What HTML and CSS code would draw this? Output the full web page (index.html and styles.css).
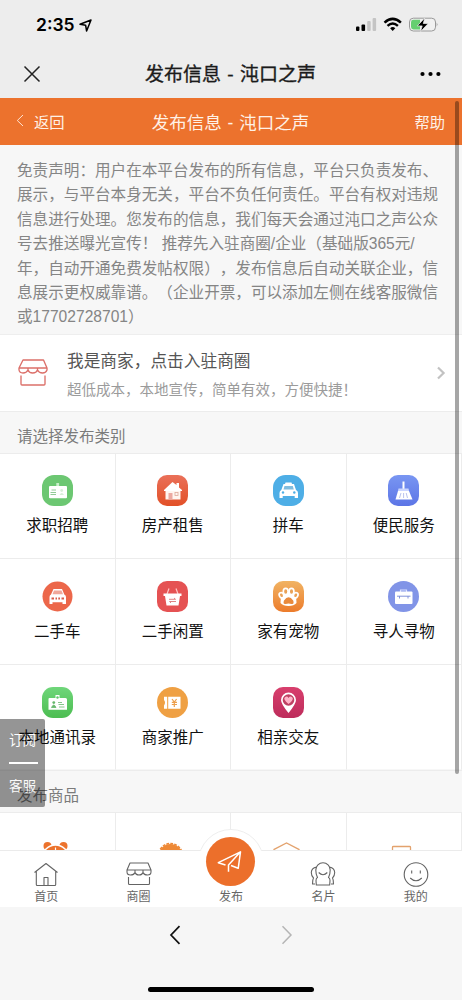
FILE: index.html
```html
<!DOCTYPE html>
<html lang="zh-CN">
<head>
<meta charset="utf-8">
<title>发布信息 - 沌口之声</title>
<link rel="stylesheet" href="styles.css">
</head>
<body>
<div class="phone">
  <header class="status">
    <span class="time">2:35</span>
    <svg class="loc" width="13" height="13" viewBox="0 0 13 13"><path d="M1 5.300 12 1 7.600 12 6.600 6.200Z" fill="none" stroke="#000" stroke-width="1.500" stroke-linejoin="round"/></svg>
    <svg class="indicators" width="84" height="16" viewBox="0 0 84 16">
      <rect x="1" y="9.500" width="3.400" height="4.500" rx="1"/><rect x="6.500" y="7.500" width="3.600" height="6.500" rx="1"/>
      <rect x="12.200" y="4" width="3.500" height="10" rx="1" fill="#c4c4c4"/><rect x="17.600" y="1" width="3.500" height="13" rx="1" fill="#c4c4c4"/>
      <path d="M29.500 5.700Q37.700-1.900 45.900 5.700" fill="none" stroke="#000" stroke-width="2.500"/>
      <path d="M32.500 8.800Q37.700 4 42.900 8.800" fill="none" stroke="#000" stroke-width="2.400"/>
      <path d="M35.100 11.200Q37.700 8.900 40.300 11.200L37.700 13.900Z"/>
      <rect x="54.500" y="1.200" width="26" height="12.800" rx="3.800" fill="#f1f1f1" stroke="#999" stroke-width="1"/>
      <path d="M58.500 2.800H65V12.400H58.500Q56 12.400 56 10V5.200Q56 2.800 58.500 2.800Z" fill="#65cf70"/>
      <path d="M81.700 5.600Q83.500 7.500 81.700 9.400Z" fill="#999"/>
      <path d="M69.700 1 62.300 8.900H67.200L65.600 14.600 73.200 6.500H68.300Z" stroke="#f1f1f1" stroke-width=".7"/>
    </svg>
  </header>
  <div class="wx-bar">
    <svg width="18" height="18" viewBox="0 0 18 18"><path d="M1.500 1.500 16.500 16.500M16.500 1.500 1.500 16.500" fill="none" stroke="#222" stroke-width="1.500"/></svg>
    <h1>发布信息 - 沌口之声</h1>
    <svg width="21" height="6" viewBox="0 0 21 6"><circle cx="2.500" cy="3" r="2.100"/><circle cx="10.500" cy="3" r="2.100"/><circle cx="18.400" cy="3" r="2.100"/></svg>
  </div>
  <div class="page-bar">
    <span class="back"><svg width="8" height="13" viewBox="0 0 8 13"><path d="M7 1 1.300 6.500 7 12" fill="none" stroke="#ffe3d2" stroke-width="1"/></svg>返回</span>
    <h2>发布信息 - 沌口之声</h2>
    <span class="help">帮助</span>
  </div>

  <main class="content">
    <p class="notice"><span>免责声明：用户在本平台发布的所有信息，平台只负责发布、</span><span>展示，与平台本身无关，平台不负任何责任。平台有权对违规</span><span>信息进行处理。您发布的信息，我们每天会通过沌口之声公众</span><span>号去推送曝光宣传！ 推荐先入驻商圈/企业（基础版365元/</span><span>年，自动开通免费发帖权限），发布信息后自动关联企业，信</span><span>息展示更权威靠谱。（企业开票，可以添加左侧在线客服微信</span><span>或17702728701）</span></p>

    <div class="merchant">
      <svg width="30" height="28" viewBox="0 0 30 28" fill="none" stroke="#dc706a" stroke-width="1.350" stroke-linejoin="round"><path d="M5 1H25.500L29 9H1ZM1 9V11Q1.500 14 5 14T10 11Q11 14 14.700 14T19.500 11Q21 14 24.500 14T29 11V9M10 9.500V11M19.500 9.500V11M3 16.500V25Q3 26 4 26H26Q27 26 27 25V16.500"/></svg>
      <div class="merchant-text"><div class="m-title">我是商家，点击入驻商圈</div><div class="m-sub">超低成本，本地宣传，简单有效，方便快捷！</div></div>
      <svg width="10" height="14" viewBox="0 0 10 14"><path d="M2 1.500 7.600 7 2 12.500" fill="none" stroke="#c2c2c2" stroke-width="2.200"/></svg>
    </div>

    <h3 class="section">请选择发布类别</h3>
    <div class="grid categories">
      <div class="cell"><svg class="ico" viewBox="0 0 31 31"><rect width="31" height="31" rx="12" fill="#6cc772"/><rect x="14.300" y="8" width="2.800" height="5" fill="#c9efcb"/><rect x="7" y="11" width="18" height="12.200" rx="1" fill="#fff"/><path d="M9.500 15H14M8.500 17.500H14M8.500 19.500H14" stroke="#91ca96"/><circle cx="19.700" cy="15.500" r="1.400" fill="#d8eed9"/><path d="M17.500 20Q19.700 16 22 20Z" fill="#d8eed9"/></svg><span>求职招聘</span></div>
      <div class="cell"><svg class="ico" viewBox="0 0 31 31"><defs><linearGradient id="red" x2="0" y2="1"><stop stop-color="#ea7059"/><stop offset="1" stop-color="#e25027"/></linearGradient></defs><rect width="31" height="31" rx="10" fill="url(#red)"/><path d="M7 15 15.500 7 19.500 10V8H22V12.500L25 15V16H7Z" fill="#fff"/><path d="M8.500 16H23.500V24.500H8.500Z" fill="#fff5f0"/><rect x="11.500" y="18" width="4" height="6.500" fill="#eca9a1"/><rect x="18" y="17.500" width="3" height="3" fill="none" stroke="#dda898" stroke-width=".8"/></svg><span>房产租售</span></div>
      <div class="cell"><svg class="ico" viewBox="0 0 31 31"><rect width="31" height="31" rx="12.500" fill="#4eaee6"/><path d="M12.500 7.500H18.500L19 9H21L23 15Q25 16 25 18V23H21.700V21H9.700V23H6.500V18Q6.500 16 8.300 15L10.500 9H12Z" fill="#fff"/><path d="M11.500 11 10.500 14.500H20.800L19.800 11Z" fill="#81bddf"/><circle cx="10" cy="17.500" r="1.200" fill="#4eaee6"/><circle cx="21.300" cy="17.500" r="1.200" fill="#4eaee6"/></svg><span>拼车</span></div>
      <div class="cell"><svg class="ico" viewBox="0 0 31 31"><defs><linearGradient id="blue" x2="0" y2="1"><stop stop-color="#7996f2"/><stop offset="1" stop-color="#5c75e6"/></linearGradient></defs><rect width="31" height="31" rx="10" fill="url(#blue)"/><path d="M15.500 6.500V14" stroke="#fff" stroke-width="2"/><path d="M10.500 13.500H20.500L21 16H10Z" fill="#cad5ff"/><path d="M10 16H21L24.500 24.500H7.500Z" fill="#fff"/><path d="M13 18 11.500 23M15.600 18V23M18.200 18 19.500 23" stroke="#a7b2e8" stroke-width=".8"/></svg><span>便民服务</span></div>

      <div class="cell"><svg class="ico" viewBox="0 0 31 31"><circle cx="15.500" cy="15.500" r="15" fill="#ec674a"/><path d="M11.500 8H20L22.300 13.500Q24 14 24 16V23H20.500V21.200H10.500V23H7.500V16Q7.500 14 9 13.500Z" fill="#fff"/><path d="M12 9.500H19.500L21 13.300H10.500Z" fill="#f0a79a"/><path d="M9.500 17.500H12M13.500 17.500H15M16.300 17.500H18M19.500 17.500H22" stroke="#d95c4a" stroke-width="1.800"/></svg><span>二手车</span></div>
      <div class="cell"><svg class="ico" viewBox="0 0 31 31"><rect width="31" height="31" rx="10" fill="#e55253"/><path d="M10 13 12 7.500M21 13 19 7.500" stroke="#ffc8c7" stroke-width="1.200"/><path d="M6.500 12.500H24.500V15H23L21.500 24.500H9.500L8 15H6.500Z" fill="#fff"/><path d="M12 18.300H18.500L17 17M19 20.500H12.500L14 22" fill="none" stroke="#de7878" stroke-width=".9"/></svg><span>二手闲置</span></div>
      <div class="cell"><svg class="ico" viewBox="0 0 31 31"><defs><linearGradient id="pet" x2="0" y2="1"><stop stop-color="#f1b363"/><stop offset="1" stop-color="#ec7c2c"/></linearGradient></defs><rect width="31" height="31" rx="10" fill="url(#pet)"/><path d="M8 15Q15.500 7 23 15L23.500 22Q21 25 15.500 25T7.500 22Z" fill="#fff"/><g fill="#e9a257" stroke="#fff" stroke-width="1.700"><ellipse cx="12.700" cy="10.500" rx="2.400" ry="3.200"/><ellipse cx="18.500" cy="10.500" rx="2.400" ry="3.200"/><ellipse cx="8.500" cy="14.300" rx="2.200" ry="2.700" transform="rotate(-25 8.500 14.300)"/><ellipse cx="22.700" cy="14.300" rx="2.200" ry="2.700" transform="rotate(25 22.700 14.300)"/></g><path d="M11 19.500Q15.600 13 20.200 19.500 21.500 23.500 18.500 23 15.500 21.800 12.700 23 9.500 23.500 11 19.500Z" fill="#e98a3c"/></svg><span>家有宠物</span></div>
      <div class="cell"><svg class="ico" viewBox="0 0 31 31"><circle cx="15.500" cy="15.500" r="15.500" fill="#8194e7"/><path d="M12.500 11V9H18.500V11" fill="none" stroke="#d9e0ff" stroke-width="1.200"/><rect x="7" y="10.500" width="17.500" height="12.500" rx="1" fill="#fff"/><path d="M9 15.200H22.500M11.500 15V17.500M20 15V17.500" stroke="#8293d9" stroke-width="1"/></svg><span>寻人寻物</span></div>

      <div class="cell"><svg class="ico" viewBox="0 0 31 31"><defs><linearGradient id="green" x2="0" y2="1"><stop stop-color="#6fd67a"/><stop offset="1" stop-color="#4cbd51"/></linearGradient></defs><rect width="31" height="31" rx="11" fill="url(#green)"/><path d="M7.500 11H13.500V8H17.500V11H23.500Q25 11 25 12.500V22.700H6.500V12Q6.500 11 7.500 11Z" fill="#fff"/><circle cx="15.500" cy="10.500" r="1.200" fill="#5ec867"/><circle cx="11.800" cy="15.600" r="1.400" fill="#66b86c"/><path d="M9.500 20.500Q11.800 15.500 14 20.500ZM16 15.500H20M16.500 17.500H22M17 20H22.500" stroke="#66b86c" stroke-width=".8" fill="#66b86c"/></svg><span>本地通讯录</span></div>
      <div class="cell"><svg class="ico" viewBox="0 0 31 31"><circle cx="15.500" cy="15.500" r="15.500" fill="#efa043"/><path d="M7 9.700H10.200V21.700H7V18.500Q9 15.700 7 13ZM11.200 9.700H23.500V21.700H11.200Z" fill="#fff"/><path d="m15 12 2.300 3 2.300-3M14.800 15.300H20M14.800 17.500H20M17.300 15V20" fill="none" stroke="#ed9f4b" stroke-width="1.200"/></svg><span>商家推广</span></div>
      <div class="cell"><svg class="ico" viewBox="0 0 31 31"><defs><linearGradient id="pink" x2="0" y2="1"><stop stop-color="#d83f6d"/><stop offset="1" stop-color="#bd2c5b"/></linearGradient></defs><rect width="31" height="31" rx="10" fill="url(#pink)"/><path d="M15.500 26Q8 17 8 13A7.500 7.500 0 0 1 23 13Q23 17 15.500 26Z" fill="#fff"/><circle cx="15.500" cy="13" r="5.800" fill="#bf4163"/><path d="M15.500 17Q9.500 12 12 10.200 14.200 8.700 15.500 11 17 8.700 19.200 10.200 21.500 12.500 15.500 17Z" fill="#ffb4c8"/></svg><span>相亲交友</span></div>
      <div class="cell"></div>
    </div>

    <h3 class="section">发布商品</h3>
    <div class="grid">
      <div class="cell"><svg class="ico wide" viewBox="0 0 31 31"><circle cx="7.500" cy="6" r="4" fill="#ec732d"/><circle cx="23.500" cy="6" r="4" fill="#ec732d"/><circle cx="15.500" cy="18" r="13" fill="#ec732d" stroke="#fff" stroke-width="1.500"/><path d="M15.500 7.500V16" stroke="#fff" stroke-width="1.200"/></svg></div>
      <div class="cell"><svg class="ico wide" viewBox="0 0 31 31"><circle cx="15.500" cy="15.500" r="11.600" fill="#ee8936"/><circle cx="15.500" cy="15.500" r="12" fill="none" stroke="#ee8936" stroke-width="1.500" stroke-dasharray="2.800 1.200"/></svg></div>
      <div class="cell"><svg class="ico wide" viewBox="0 0 31 31" fill="none" stroke="#e3a26d" stroke-width="1.300"><path d="M3 10.500V9.500L15.500 3 28 9.500V10.500"/></svg></div>
      <div class="cell"><svg class="ico wide" viewBox="0 0 31 31" fill="none" stroke="#e3a26d" stroke-width="1.300"><path d="M6.500 11V7.200Q6.500 6.500 7.500 6.500H23.500Q24.500 6.500 24.500 7.200V11"/></svg></div>
    </div>
    <div class="float-menu"><span>订阅</span><i></i><span>客服</span></div>
  </main>

  <nav class="tabs">
    <div class="tab"><svg viewBox="0 0 26 26"><path d="M1.500 10.500 13 1.500 24.500 10.500M3.300 9.200V22.500Q3.300 23.500 4.300 23.500H21.700Q22.700 23.500 22.700 22.500V9.200M11 23V15.500H15V23"/></svg><span>首页</span></div>
    <div class="tab"><svg viewBox="0 0 26 26"><path d="M4 1H22L25 8H1ZM1 8V10Q1 13 4.500 13T9 10.500Q10 13 13 13T17 10.500Q18 13 21.500 13T25 10V8M9 8.500V10.500M17 8.500V10.500M2.500 15V21.500Q2.500 22.500 3.500 22.500H22.500Q23.500 22.500 23.500 21.500V15"/></svg><span>商圈</span></div>
    <div class="tab publish"><div class="halo"></div><div class="disc"><svg viewBox="0 0 26 26"><path d="M8.500 16 1.300 13.700 23.500 2.800 21.200 19.300 14 16.500M11.500 22.800V16L23.500 2.800"/></svg></div><span>发布</span></div>
    <div class="tab"><svg viewBox="0 0 26 26"><path d="M7.500 15.500Q5.700 11.500 5.800 8A7.200 7.200 0 0 1 20.200 8Q20.300 11.500 18.500 15.500 20 16 20 18.500L19.700 23H6.300L6 18.500Q6 16 7.500 15.500ZM8.700 10.500Q13 15 17.300 10.500M6.500 5Q1.500 6 1.300 10.500 1.300 14 3.500 16 2.500 17.500 2.500 22H5M19.500 5Q24.500 6 24.700 10.500 24.700 14 22.500 16 23.500 17.500 23.500 22H21"/></svg><span>名片</span></div>
    <div class="tab"><svg viewBox="0 0 26 26"><circle cx="13" cy="12.500" r="11.800"/><path d="M8.700 8.500V11.500M17.300 8.500V11.500M7.200 16Q13 21.500 18.800 16"/></svg><span>我的</span></div>
  </nav>

  <footer class="browser">
    <div class="arrows">
      <svg width="12" height="20" viewBox="0 0 12 20"><path d="M10.500 1.200 2 10 10.500 18.800" fill="none" stroke="#111" stroke-width="1.700"/></svg>
      <svg width="12" height="20" viewBox="0 0 12 20"><path d="M1.500 1.200 10 10 1.500 18.800" fill="none" stroke="#b5b5b5" stroke-width="1.500"/></svg>
    </div>
    <div class="home-indicator"></div>
  </footer>
  <div class="scrollbar"></div>
</div>
</body>
</html>
```
FILE: styles.css
```css
* { box-sizing: border-box; }
body {
  margin: 0;
  font-family: "Liberation Sans", "Noto Sans CJK SC", sans-serif;
  text-spacing-trim: space-all;
}
h1, h2, h3, p { margin: 0; font-weight: 400; }
svg { display: block; flex: none; }
.phone {
  position: relative;
  width: 462px;
  height: 1000px;
  overflow: hidden;
  display: flex;
  flex-direction: column;
  background: #f7f7f7;
  white-space: nowrap;
}

.status {
  height: 50px;
  flex: none;
  background: #ededed;
  display: flex;
  align-items: center;
  padding: 0 23px 0 36px;
}
.time { font: 600 17.5px/20px Inter, sans-serif; width: 39px; }
.loc { margin-left: 4px; }
.indicators { margin-left: auto; }
.wx-bar {
  height: 48px;
  flex: none;
  padding: 0 21px 0 23px;
  background: #ededed;
  display: flex;
  align-items: center;
  justify-content: space-between;
}
.wx-bar h1 {
  padding-top: 1px;
  font-size: 19px;
  line-height: 47px;
  color: #1b1b1b;
  word-spacing: 1px;
  -webkit-text-stroke: .35px #1b1b1b;
}

.page-bar {
  height: 47px;
  flex: none;
  display: grid;
  grid-template-columns: 100px 1fr 100px;
  align-items: center;
  padding: 0 17px 0 16px;
  background: #ec722d;
  color: #fff1e6;
  font-size: 15.3px;
}
.back { display: flex; align-items: center; gap: 10px; padding-bottom: 2px; }
.page-bar h2 { font-size: 17.5px; text-align: center; word-spacing: 1px; }
.help { text-align: right; padding-bottom: 2px; }

.content { position: relative; height: 705px; flex: none; overflow: hidden; }
.notice {
  height: 190px;
  padding: 14px 0 0 17px;
  border-bottom: 1px solid #eee;
  font-size: 15.6px;
  line-height: 24.4px;
  color: #858585;
}
.notice span { display: block; }
.merchant {
  height: 76px;
  display: flex;
  align-items: center;
  padding: 0 16px 0 18px;
  background: #fff;
}
.merchant-text { margin-left: 19px; flex: 1; padding-top: 6px; }
.m-title { font-size: 16.7px; line-height: 28px; color: #555; }
.m-sub { font-size: 14.5px; line-height: 29px; color: #9b9b9b; }
.section {
  height: 42px;
  padding-left: 17px;
  border-top: 1px solid #ececec;
  font-size: 15.5px;
  line-height: 49px;
  color: #7b7b7b;
}
.grid {
  display: grid;
  grid-template-columns: repeat(4, 115.5px);
  grid-auto-rows: 106px;
  border-top: 1px solid #ececec;
  background: #fff;
}
.categories { grid-template-rows: 105px 106px 105px; }
.cell {
  display: flex;
  flex-direction: column;
  align-items: center;
  padding-top: 21px;
  border-right: 1px solid #ececec;
  border-bottom: 1px solid #ececec;
  font-size: 15.5px;
  line-height: 24px;
  color: #111;
}
.cell:nth-child(n+5) { padding-top: 22px; }
.cell span { margin-top: 8px; }
.ico { width: 31px; height: 31px; }
.cell:nth-child(n+9) { border-bottom-color: #f7f7f7; }
.ico.wide { margin-left: -4px; margin-top: 6px; }

.float-menu {
  position: absolute;
  left: 0;
  top: 574px;
  width: 44.5px;
  height: 88px;
  padding: 10px 0 0 9px;
  border-radius: 0 2px 2px 0;
  background: #000;
  opacity: .41;
  color: #fff;
  font-size: 13.6px;
  line-height: 24px;
}
.float-menu span { display: block; }
.float-menu i { display: block; width: 29px; height: 1.5px; margin: 9px 0 11px; background: #fff; }

.tabs {
  position: relative;
  height: 57px;
  flex: none;
  display: grid;
  grid-template-columns: repeat(5, 1fr);
  border-top: 1px solid #ebebeb;
  background: #fff;
}
.tab {
  position: relative;
  display: flex;
  flex-direction: column;
  align-items: center;
  padding-top: 11px;
  font-size: 12px;
  line-height: 19px;
  color: #666;
}
.tab svg { width: 26px; height: 26px; fill: none; stroke: #646464; stroke-width: 1.1; stroke-linejoin: round; }
.tab span { position: relative; }
.publish { padding-top: 37px; }
/* Raised button overlapping the top edge of the tab bar */
.halo {
  position: absolute;
  top: -22px;
  left: 50%;
  width: 66px;
  height: 66px;
  margin-left: -33px;
  border: 1px solid #eee;
  border-radius: 50%;
  background: #fff;
  clip-path: inset(0 0 44px 0);
}
.disc {
  position: absolute;
  top: -14px;
  left: 50%;
  width: 49px;
  height: 49px;
  margin-left: -25px;
  border-radius: 50%;
  background: #ec6f2b;
  display: grid;
  place-items: center;
}
.disc svg { stroke: #fff; stroke-width: 1.5; }

.browser { height: 93px; flex: none; background: #f6f6f6; padding-top: 18px; }
.arrows { display: flex; justify-content: center; gap: 100px; }
.home-indicator { width: 166px; height: 5px; margin: 42px auto 0; border-radius: 3px; background: #000; }
.scrollbar {
  position: absolute;
  right: 3px;
  top: 101px;
  width: 4px;
  height: 673px;
  border-radius: 2px;
  background: rgba(0, 0, 0, .35);
}
```
